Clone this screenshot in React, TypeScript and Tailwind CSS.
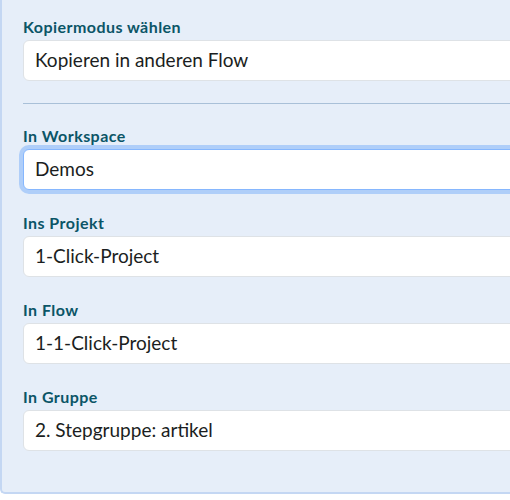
import React from "react";

const font = { fontFamily: "Lato, 'Noto Sans', 'Liberation Sans', sans-serif" };

function Field({ label, value, focused = false }: { label: string; value: string; focused?: boolean }) {
  return (
    <div className="flex flex-col">
      <div className="h-[20px] leading-[20px] text-[16px] tracking-[0.45px] font-bold text-[#0b5567] mb-[3px]">{label}</div>
      <div
        className={
          "h-[41px] w-[560px] rounded-[6px] bg-white flex items-center pl-[11px] text-[19px] text-[#1b1e21] " +
          (focused
            ? "border border-[#86b7fe] shadow-[0_0_0_4px_rgba(13,110,253,0.25)]"
            : "border border-[#dee2e6]")
        }
      >
        {value}
      </div>
    </div>
  );
}

export default function App() {
  return (
    <div className="w-[510px] h-[500px] overflow-hidden bg-white" style={font}>
      <div className="w-[620px] h-[494px] bg-[#e6eef9] border-l-2 border-b-2 border-[#c4d7f3] rounded-bl-[5px] pl-[21px] pt-[17px] flex flex-col">
        <Field label="Kopiermodus wählen" value="Kopieren in anderen Flow" />
        <div className="mt-[22px] mb-[22px] border-t border-[#a9c0d8] w-[600px]" />
        <div className="flex flex-col gap-[23px]">
          <Field label="In Workspace" value="Demos" focused />
          <Field label="Ins Projekt" value="1-Click-Project" />
          <Field label="In Flow" value="1-1-Click-Project" />
          <Field label="In Gruppe" value="2. Stepgruppe: artikel" />
        </div>
      </div>
    </div>
  );
}
